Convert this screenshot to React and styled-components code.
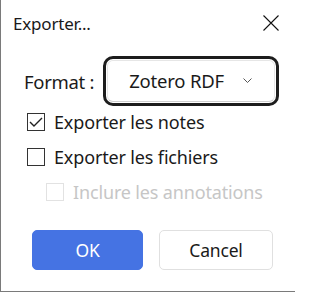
import React from "react";
import styled, { createGlobalStyle } from "styled-components";

const GlobalStyle = createGlobalStyle`
html, body {
  margin: 0;
  padding: 0;
  background: #ffffff;
}
body {
  font-family: "Noto Sans", "Open Sans", sans-serif;
  color: #1a1a1a;
}
`;

const Window = styled.div`
box-sizing: border-box;
width: 295px;
height: 292px;
background: #ffffff;
border-left: 1px solid #7a7a7a;
border-bottom: 1px solid #7a7a7a;
display: flex;
flex-direction: column;
`;

const TitleBar = styled.div`
height: 45px;
display: flex;
align-items: center;
justify-content: space-between;
padding: 0 16px 0 12px;
`;

const Title = styled.span`
font-size: 17px;
letter-spacing: -0.2px;
margin-top: 1px;
`;

const CloseButton = styled.button`
border: 0;
background: none;
padding: 0;
width: 16px;
height: 16px;
display: flex;
`;

const FormatRow = styled.div`
display: flex;
align-items: center;
gap: 9px;
margin: 11px 0 0 23px;
`;

const Label = styled.span`
font-size: 18.5px;
letter-spacing: -0.3px;
`;

const Select = styled.div`
box-sizing: border-box;
width: 176px;
height: 50px;
border: 3px solid #1d1d1d;
border-radius: 10px;
padding: 1px;
display: flex;
`;

const SelectFace = styled.div`
flex: 1;
border: 1px solid #e6e6e6;
border-bottom-color: #cfcfcf;
border-radius: 6px;
display: flex;
align-items: center;
padding: 0 0 1px 21px;
gap: 19px;
font-size: 18.5px;
letter-spacing: -0.2px;
`;

const Options = styled.div`
display: flex;
flex-direction: column;
gap: 17px;
margin: 7px 0 0 26px;
`;

const Option = styled.label`
display: flex;
align-items: center;
gap: 9px;
height: 18px;
margin-left: ${(p) => (p.$nested ? "19px" : "0")};
font-size: 18px;
letter-spacing: -0.15px;
color: ${(p) => (p.$disabled ? "#c6c6c6" : "#1a1a1a")};
`;

const Box = styled.span`
box-sizing: border-box;
width: 18px;
height: 18px;
border: 1px solid ${(p) => (p.$disabled ? "#e2e2e2" : "#333333")};
display: flex;
align-items: center;
justify-content: center;
flex-shrink: 0;
`;

const Buttons = styled.div`
display: flex;
gap: 16px;
margin: 29px 0 0 31px;
`;

const Button = styled.button`
box-sizing: border-box;
width: ${(p) => (p.$primary ? "111px" : "114px")};
height: 40px;
border-radius: 5px;
border: 1px solid ${(p) => (p.$primary ? "#4573e3" : "#e0e0e0")};
background: ${(p) => (p.$primary ? "#4573e3" : "#ffffff")};
color: ${(p) => (p.$primary ? "#ffffff" : "#1a1a1a")};
font-family: "Noto Sans", sans-serif;
font-size: 17.5px;
letter-spacing: -0.2px;
padding: 0 0 1px;
`;

const Check = () => (
  <svg width="14" height="12" viewBox="0 0 14 12">
    <polyline points="1,6 5,10 13,2" fill="none" stroke="#222" strokeWidth="1.4" />
  </svg>
);

const Checkbox = ({ checked, disabled, nested, children }) => (
  <Option $disabled={disabled} $nested={nested}>
    <Box $disabled={disabled}>{checked && <Check />}</Box>
    {children}
  </Option>
);

const App = () => {
  return (
    <>
      <GlobalStyle />
      <Window>
        <TitleBar>
          <Title>Exporter...</Title>
          <CloseButton aria-label="Fermer">
            <svg width="16" height="16" viewBox="0 0 16 16">
              <path d="M0.5 0.5 L15.5 15.5 M15.5 0.5 L0.5 15.5" stroke="#111" strokeWidth="1.1" />
            </svg>
          </CloseButton>
        </TitleBar>

        <FormatRow>
          <Label>Format :</Label>
          <Select>
            <SelectFace>
              <span>Zotero RDF</span>
              <svg width="9" height="5" viewBox="0 0 9 5">
                <polyline points="0.5,0.5 4.5,4.5 8.5,0.5" fill="none" stroke="#555" strokeWidth="1" />
              </svg>
            </SelectFace>
          </Select>
        </FormatRow>

        <Options>
          <Checkbox checked>Exporter les notes</Checkbox>
          <Checkbox>Exporter les fichiers</Checkbox>
          <Checkbox disabled nested>Inclure les annotations</Checkbox>
        </Options>

        <Buttons>
          <Button $primary>OK</Button>
          <Button>Cancel</Button>
        </Buttons>
      </Window>
    </>
  );
};

export default App;
